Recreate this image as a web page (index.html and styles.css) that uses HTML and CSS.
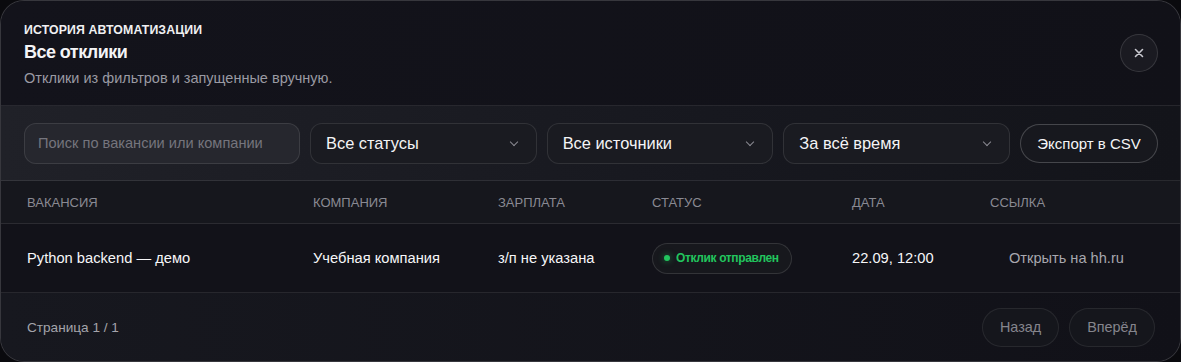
FILE: index.html
```html
<!DOCTYPE html>
<html lang="ru">
<head>
    <meta charset="UTF-8">
    <meta name="viewport" content="width=device-width, initial-scale=1.0">
    <title>История автоматизации</title>
    <link rel="stylesheet" href="styles.css">
</head>
<body>
    <div class="modal">
        <header class="modal-header">
            <div class="titles">
                <div class="eyebrow">История автоматизации</div>
                <h1>Все отклики</h1>
                <p class="subtitle">Отклики из фильтров и запущенные вручную.</p>
            </div>
            <button class="close-button" aria-label="Закрыть">
                <svg width="12" height="12" viewBox="0 0 12 12"><path d="M2.5 2.5l7 7M9.5 2.5l-7 7" stroke="currentColor" stroke-width="1.6" stroke-linecap="round"/></svg>
            </button>
        </header>

        <div class="filters">
            <input class="search" type="text" placeholder="Поиск по вакансии или компании">
            <div class="select">Все статусы <span class="chevron"></span></div>
            <div class="select">Все источники <span class="chevron"></span></div>
            <div class="select">За всё время <span class="chevron"></span></div>
            <button class="export">Экспорт в CSV</button>
        </div>

        <div class="table">
            <div class="row head">
                <div>Вакансия</div>
                <div>Компания</div>
                <div>Зарплата</div>
                <div>Статус</div>
                <div>Дата</div>
                <div>Ссылка</div>
            </div>
            <div class="row body">
                <div>Python backend — демо</div>
                <div>Учебная компания</div>
                <div>з/п не указана</div>
                <div><span class="badge"><span class="dot"></span>Отклик отправлен</span></div>
                <div>22.09, 12:00</div>
                <div><a class="open-link" href="#">Открыть на hh.ru</a></div>
            </div>
        </div>

        <footer class="modal-footer">
            <span class="page-info">Страница 1 / 1</span>
            <div class="pager">
                <button class="ghost">Назад</button>
                <button class="ghost">Вперёд</button>
            </div>
        </footer>
    </div>
</body>
</html>
```

FILE: styles.css
```css
* {
    margin: 0;
    padding: 0;
    box-sizing: border-box;
    font-family: 'Liberation Sans', Arial, sans-serif;
}

:root {
    --line: rgba(255, 255, 255, 0.09);
    --text: #f4f4f6;
    --muted: #9a9aa3;
    --green: #22c55e;
}

body {
    background-color: #0a0a0e;
    color: var(--text);
    width: 1181px;
    height: 362px;
    overflow: hidden;
}

.modal {
    height: 362px;
    border: 1px solid rgba(255, 255, 255, 0.16);
    border-radius: 24px;
    background-color: #111118;
    overflow: hidden;
    display: flex;
    flex-direction: column;
}

.modal-header {
    height: 105px;
    padding: 0 22px 0 23px;
    display: flex;
    justify-content: space-between;
    align-items: center;
    background: linear-gradient(90deg, #13131b, #111118);
    border-bottom: 1px solid var(--line);
}

.titles {
    margin-top: 3px;
}

.eyebrow {
    font-size: 12.3px;
    font-weight: 700;
    text-transform: uppercase;
    letter-spacing: 0.01em;
    color: #f0f0f2;
    line-height: 14px;
}

h1 {
    font-size: 18px;
    font-weight: 700;
    letter-spacing: -0.03em;
    line-height: 22px;
    margin-top: 4px;
}

.subtitle {
    font-size: 14.5px;
    color: var(--muted);
    line-height: 17px;
    margin-top: 7px;
}

.close-button {
    width: 38px;
    height: 38px;
    border-radius: 50%;
    background-color: #1a1a21;
    border: 1px solid rgba(255, 255, 255, 0.13);
    color: #c8c8cf;
    display: flex;
    align-items: center;
    justify-content: center;
    cursor: pointer;
}

.filters {
    height: 75px;
    padding: 0 22px 0 23px;
    display: flex;
    align-items: center;
    gap: 10px;
    background: linear-gradient(90deg, #202128, #17181f 60%, #13141a);
    border-bottom: 1px solid var(--line);
}

.search {
    flex: 0 0 276px;
    height: 41px;
    border-radius: 12px;
    border: 1px solid rgba(255, 255, 255, 0.1);
    background-color: #26272e;
    padding: 0 13px;
    font-size: 14.6px;
    color: var(--text);
    outline: none;
}

.search::placeholder {
    color: #75757d;
}

.select {
    flex: 1 1 0;
    height: 41px;
    border-radius: 12px;
    border: 1px solid rgba(255, 255, 255, 0.1);
    background-color: #1a1b21;
    padding: 0 15px;
    font-size: 16.4px;
    display: flex;
    align-items: center;
    justify-content: space-between;
    color: var(--text);
}

.chevron {
    width: 6px;
    height: 6px;
    border-right: 1.5px solid #8a8a92;
    border-bottom: 1.5px solid #8a8a92;
    transform: rotate(45deg);
    margin: -3px 4px 0 0;
}

.export {
    flex: 0 0 138px;
    height: 39px;
    border-radius: 20px;
    border: 1px solid rgba(255, 255, 255, 0.2);
    background-color: #17181e;
    color: var(--text);
    font-size: 15px;
    white-space: nowrap;
    cursor: pointer;
}

.row {
    display: grid;
    grid-template-columns: 286px 185px 154px 200px 138px 1fr;
    padding-left: 26px;
    align-items: center;
    border-bottom: 1px solid var(--line);
}

.row.head {
    height: 43px;
    font-size: 13px;
    text-transform: uppercase;
    color: #8a8a93;
    background-color: #16171d;
}

.row.body {
    height: 69px;
    font-size: 14.7px;
    color: #f6f6f8;
    background-color: #121219;
}

.badge {
    display: inline-flex;
    align-items: center;
    gap: 6px;
    height: 31px;
    padding: 0 12px 0 11px;
    border-radius: 16px;
    background-color: #17181d;
    border: 1px solid rgba(255, 255, 255, 0.12);
    color: var(--green);
    font-size: 12px;
    font-weight: 700;
    letter-spacing: -0.03em;
}

.dot {
    width: 6px;
    height: 6px;
    border-radius: 50%;
    background-color: var(--green);
    box-shadow: 0 0 6px rgba(34, 197, 94, 0.6);
}

.open-link {
    display: inline-block;
    padding: 0 19px;
    color: #a7a7ae;
    font-size: 14.6px;
    text-decoration: none;
}

.modal-footer {
    flex: 1;
    padding: 0 25px 0 26px;
    display: flex;
    justify-content: space-between;
    align-items: center;
    background: linear-gradient(90deg, #17181f, #111118);
}

.page-info {
    font-size: 13.6px;
    color: #a4a4ab;
}

.pager {
    display: flex;
    gap: 10px;
}

.ghost {
    height: 39px;
    padding: 0 17px;
    border-radius: 20px;
    border: 1px solid rgba(255, 255, 255, 0.08);
    background-color: #15161c;
    color: #85858d;
    font-size: 14.4px;
    cursor: pointer;
}
```
